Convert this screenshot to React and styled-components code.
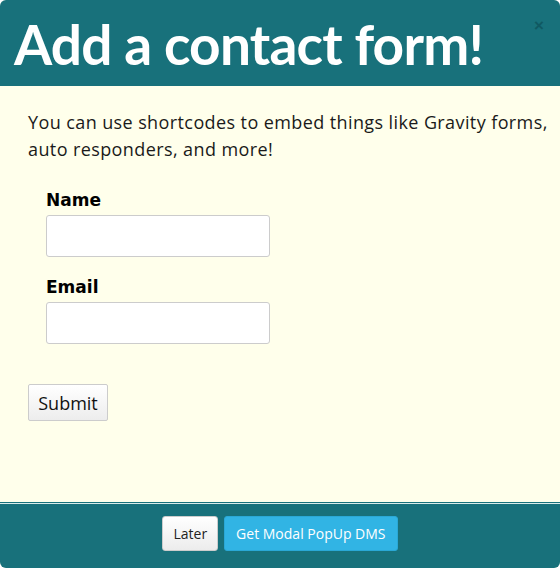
import React from "react";
import styled, { createGlobalStyle } from "styled-components";

const Global = createGlobalStyle`
	html, body {
		margin: 0;
		padding: 0;
		background: #ffffff;
	}
	* {
		box-sizing: border-box;
	}
`;

const S = {
	Modal: styled.div`
		width: 560px;
		height: 568px;
		display: flex;
		flex-direction: column;
		border-radius: 6px;
		overflow: hidden;
		background-color: #ffffeb;
		font-family: "Open Sans", "Liberation Sans", sans-serif;
	`,
	Header: styled.header`
		position: relative;
		height: 86px;
		background-color: #18717b;
		padding: 12px 0 0 14px;
	`,
	Title: styled.h1`
		margin: 0;
		color: #ffffff;
		font-family: Lato, "Open Sans", sans-serif;
		font-weight: 700;
		font-size: 55px;
		line-height: 64px;
		letter-spacing: -0.8px;
	`,
	Close: styled.button`
		position: absolute;
		top: 17px;
		right: 16px;
		border: none;
		background: none;
		padding: 0;
		color: #0b4a52;
		opacity: 0.6;
		font-size: 17px;
		font-weight: 700;
		line-height: 1;
		cursor: pointer;
	`,
	Body: styled.div`
		flex: 1;
		padding: 23px 6px 0 28px;
		border-bottom: 1px solid #18717b;
	`,
	Intro: styled.p`
		margin: 0 0 25px;
		font-size: 18px;
		line-height: 27px;
		letter-spacing: 0.4px;
		color: #1a1a1a;
	`,
	Form: styled.form`
		display: flex;
		flex-direction: column;
		align-items: flex-start;
	`,
	Field: styled.div`
		display: flex;
		flex-direction: column;
		padding-left: 18px;
		margin-bottom: 18px;
	`,
	Label: styled.label`
		font-family: "DejaVu Sans", Verdana, sans-serif;
		font-size: 17px;
		font-weight: 700;
		line-height: 24px;
		color: #000000;
		margin-bottom: 3px;
	`,
	Input: styled.input`
		width: 224px;
		height: 42px;
		border: 1px solid #cccccc;
		border-radius: 3px;
		background: #ffffff;
	`,
	Submit: styled.button`
		margin-top: 22px;
		width: 80px;
		height: 37px;
		padding: 0;
		font-family: "Open Sans", sans-serif;
		font-size: 18px;
		color: #111111;
		border: 1px solid #cccccc;
		border-radius: 2px;
		background: linear-gradient(#ffffff, #ededed);
	`,
	Footer: styled.footer`
		height: 65px;
		border-top: 1px solid #d9ecea;
		background-color: #18717b;
		display: flex;
		justify-content: center;
		align-items: flex-start;
		gap: 6px;
		padding-top: 12px;
	`,
	Button: styled.button`
		height: 35px;
		padding: 0 ${(p) => (p.$primary ? "11px" : "10px")};
		font-family: "Open Sans", sans-serif;
		font-size: 14px;
		border-radius: 3px;
		border: 1px solid ${(p) => (p.$primary ? "#2aa8d6" : "#cccccc")};
		color: ${(p) => (p.$primary ? "#ffffff" : "#222222")};
		background: ${(p) =>
			p.$primary ? "#31b4e4" : "linear-gradient(#ffffff, #ececec)"};
	`,
};

export default function App() {
	return (
		<>
			<Global />
			<S.Modal>
				<S.Header>
					<S.Title>Add a contact form!</S.Title>
					<S.Close>×</S.Close>
				</S.Header>
				<S.Body>
					<S.Intro>
						You can use shortcodes to embed things like Gravity forms,
						<br />
						auto responders, and more!
					</S.Intro>
					<S.Form onSubmit={(e) => e.preventDefault()}>
						<S.Field>
							<S.Label>Name</S.Label>
							<S.Input type="text" />
						</S.Field>
						<S.Field>
							<S.Label>Email</S.Label>
							<S.Input type="email" />
						</S.Field>
						<S.Submit type="submit">Submit</S.Submit>
					</S.Form>
				</S.Body>
				<S.Footer>
					<S.Button>Later</S.Button>
					<S.Button $primary>Get Modal PopUp DMS</S.Button>
				</S.Footer>
			</S.Modal>
		</>
	);
}
